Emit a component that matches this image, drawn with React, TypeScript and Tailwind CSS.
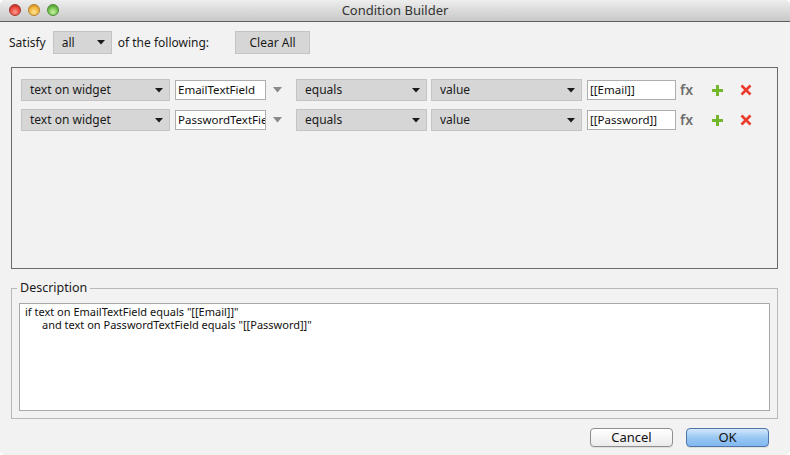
import React from "react";

const font = { fontFamily: '"Noto Sans", "DejaVu Sans", sans-serif' };

function Arrow() {
  return (
    <svg width="8" height="5" viewBox="0 0 8 5" className="shrink-0">
      <path d="M0 0 L8 0 L4 4.5 Z" fill="#1a1a1a" />
    </svg>
  );
}

function Select({ w, label }: { w: string; label: string }) {
  return (
    <div className={`${w} h-[22px] shrink-0 flex items-center justify-between pl-[8px] pr-[6px] bg-[#d6d6d6] border border-[#c4c4c4] text-[12px] text-[#1a1a1a]`}>
      <span>{label}</span>
      <Arrow />
    </div>
  );
}

function Field({ w, text }: { w: string; text: string }) {
  return (
    <div className={`${w} h-[20px] shrink-0 flex items-center pl-[2px] bg-white border border-[#aeaeae] text-[11.5px] text-[#111] overflow-hidden whitespace-nowrap`}>
      {text}
    </div>
  );
}

function Row({ widget, val }: { widget: string; val: string }) {
  return (
    <div className="flex items-center h-[22px]">
      <Select w="w-[149px]" label="text on widget" />
      <div className="ml-[5px]">
        <Field w="w-[91px]" text={widget} />
      </div>
      <svg width="9" height="6" viewBox="0 0 9 6" className="ml-[7px] shrink-0">
        <path d="M0 0 L9 0 L4.5 5.5 Z" fill="#8a8a8a" />
      </svg>
      <div className="ml-[14px]">
        <Select w="w-[131px]" label="equals" />
      </div>
      <div className="ml-[4px]">
        <Select w="w-[151px]" label="value" />
      </div>
      <div className="ml-[5px]">
        <Field w="w-[89px]" text={val} />
      </div>
      <span className="ml-[4px] text-[14px] font-semibold text-[#6e6e6e] leading-none">fx</span>
      <svg width="13" height="13" viewBox="0 0 13 13" className="ml-[18px] shrink-0">
        <path d="M6.5 1 V12 M1 6.5 H12" stroke="#72b62a" strokeWidth="3" />
      </svg>
      <svg width="12" height="12" viewBox="0 0 12 12" className="ml-[16px] shrink-0">
        <path d="M1.5 1.5 L10.5 10.5 M10.5 1.5 L1.5 10.5" stroke="#ec3a2b" strokeWidth="2.6" />
      </svg>
    </div>
  );
}

export default function App() {
  return (
    <div className="w-[790px] h-[455px] bg-white" style={font}>
      <div className="w-full h-full rounded-[5px] overflow-hidden bg-[#f2f2f2] flex flex-col">
        <div className="h-[22px] shrink-0 relative flex items-center justify-center bg-gradient-to-b from-[#eeeeee] to-[#c8c8c8] border-b border-[#5e5e5e]">
          <div className="absolute left-[9px] top-[4px] flex gap-[7px]">
            <div className="w-[12px] h-[12px] rounded-full bg-[radial-gradient(circle_at_50%_70%,#ff9a8f_0%,#e8483d_55%,#a31e14_100%)] border border-[#a8362c]" />
            <div className="w-[12px] h-[12px] rounded-full bg-[radial-gradient(circle_at_50%_70%,#ffe49a_0%,#f2b43a_55%,#b7761b_100%)] border border-[#b4822c]" />
            <div className="w-[12px] h-[12px] rounded-full bg-[radial-gradient(circle_at_50%_70%,#c9f3a6_0%,#73c24d_55%,#3e8424_100%)] border border-[#4d8b34]" />
          </div>
          <span className="text-[13px] text-[#333] leading-none">Condition Builder</span>
        </div>

        <div className="flex items-center h-[23px] mt-[9px] pl-[9px] text-[12px] text-[#1a1a1a]">
          <span>Satisfy</span>
          <div className="ml-[7px] w-[59px] h-[23px] flex items-center justify-between pl-[8px] pr-[6px] bg-[#d6d6d6] border border-[#c4c4c4]">
            <span>all</span>
            <Arrow />
          </div>
          <span className="ml-[6px]">of the following:</span>
          <div className="ml-[26px] w-[75px] h-[23px] flex items-center justify-center bg-[#d6d6d6] border border-[#c4c4c4]">
            Clear All
          </div>
        </div>

        <div className="mt-[13px] ml-[11px] w-[767px] h-[202px] shrink-0 border border-[#6a6a6a] pt-[11px] pl-[9px] flex flex-col gap-[8px]">
          <Row widget="EmailTextField" val="[[Email]]" />
          <Row widget="PasswordTextField" val="[[Password]]" />
        </div>

        <div className="mt-[19px] ml-[11px] w-[767px] h-[131px] shrink-0 border border-[#b8b8b8] relative pt-[14px] px-[7px] pb-[7px]">
          <span className="absolute left-[5px] top-[-10px] px-[3px] bg-[#f2f2f2] text-[12.5px] text-[#1a1a1a] leading-[18px]">Description</span>
          <div className="w-full h-full bg-white border border-[#a8a8a8] pl-[5px] pt-[1px] text-[11px] leading-[13px] text-[#111]">
            <div className="whitespace-nowrap">if text on EmailTextField equals "[[Email]]"</div>
            <div className="whitespace-nowrap pl-[17px]">and text on PasswordTextField equals "[[Password]]"</div>
          </div>
        </div>

        <div className="flex justify-end mt-[9px] pr-[21px] gap-[13px] text-[13px]">
          <div className="w-[83px] h-[19px] rounded-[4px] flex items-center justify-center bg-gradient-to-b from-white to-[#ebebeb] border border-[#8e8e8e] text-[#111] shadow-[0_1px_0_rgba(0,0,0,0.08)]">
            Cancel
          </div>
          <div className="w-[83px] h-[19px] rounded-[4px] flex items-center justify-center bg-gradient-to-b from-[#d3e8fc] via-[#9ac7f3] to-[#80b8f0] border border-[#4f74a8] text-[#111] shadow-[0_1px_0_rgba(0,0,0,0.08)]">
            OK
          </div>
        </div>
      </div>
    </div>
  );
}
